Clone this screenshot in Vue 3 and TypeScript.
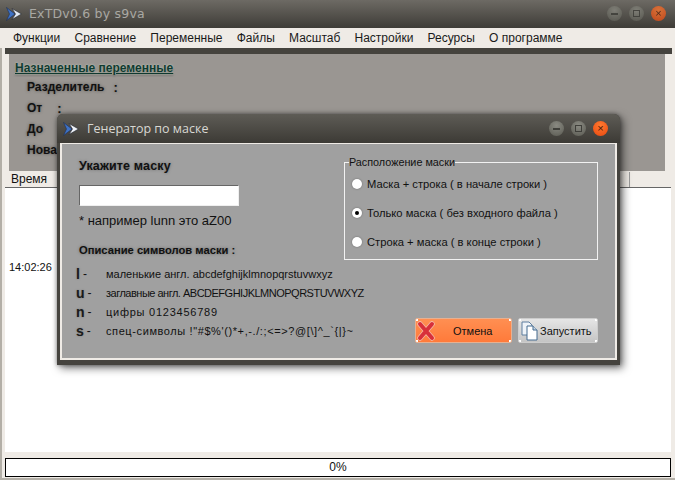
<script setup lang="ts">
const menu = ['Функции', 'Сравнение', 'Переменные', 'Файлы', 'Масштаб', 'Настройки', 'Ресурсы', 'О программе']
const vars = [
  { label: 'Разделитель', colon: ':', cls: 'sep' },
  { label: 'От', colon: ':', cls: 'from' },
  { label: 'До', colon: '', cls: 'to' },
  { label: 'Нова', colon: '', cls: 'nova' },
]
const radios = [
  { text: 'Маска + строка ( в начале строки )', on: false },
  { text: 'Только маска ( без входного файла )', on: true },
  { text: 'Строка + маска ( в конце строки )', on: false },
]
const legend = [
  { k: 'l', t: 'маленькие англ. abcdefghijklmnopqrstuvwxyz', cls: 'd-l' },
  { k: 'u', t: 'заглавные англ. ABCDEFGHIJKLMNOPQRSTUVWXYZ', cls: 'd-u' },
  { k: 'n', t: 'цифры 0123456789', cls: 'd-n' },
  { k: 's', t: 'спец-символы !"#$%\'()*+,-./:;<=>?@[\\]^_`{|}~', cls: 'd-s' },
]
</script>

<template>
  <div class="win">
    <header class="title">
      <svg class="logo" width="16" height="14" viewBox="0 0 16 14"><path d="M0.5 0.5 L9 7 L0.5 13.5 L3.5 7 Z" fill="#3f72c4" stroke="#1d2f55" stroke-width=".6"/><path d="M6 1.5 L15.5 7 L6 12.5 L9.5 7 Z" fill="#e2e9f4" stroke="#20242c" stroke-width=".6"/></svg>
      <span class="title-text">ExTDv0.6 by s9va</span>
      <div class="ctrls dim">
        <span class="c"><i class="minus"></i></span>
        <span class="c"><i class="square"></i></span>
        <span class="c close">×</span>
      </div>
    </header>
    <nav class="menu"><span v-for="m in menu" :key="m">{{ m }}</span></nav>
    <div class="darkbar"></div>
    <section class="vars">
      <div class="vars-h">Назначенные переменные</div>
      <div v-for="v in vars" :key="v.label" class="var" :class="v.cls"><b>{{ v.label }}</b><b class="colon">{{ v.colon }}</b></div>
    </section>
    <div class="thead"><span class="th first">Время</span><span class="th fill"></span><span class="th end"></span></div>
    <div class="tbody"><span class="time">14:02:26</span></div>
    <div class="foot"><div class="progress">0%</div></div>

    <div class="dialog">
      <header class="dtitle">
        <svg class="dlogo" width="16" height="14" viewBox="0 0 16 14"><path d="M0.5 0.5 L9 7 L0.5 13.5 L3.5 7 Z" fill="#3f72c4" stroke="#1d2f55" stroke-width=".6"/><path d="M6 1.5 L15.5 7 L6 12.5 L9.5 7 Z" fill="#eef2f8" stroke="#20242c" stroke-width=".6"/></svg>
        <span class="dtitle-text">Генератор по маске</span>
        <div class="ctrls">
          <span class="c"><i class="minus"></i></span>
          <span class="c"><i class="square"></i></span>
          <span class="c close">×</span>
        </div>
      </header>
      <div class="dbody">
        <div class="left">
          <div class="h h1">Укажите маску</div>
          <div class="input"></div>
          <div class="hint">* например lunn это aZ00</div>
          <div class="h h2">Описание символов маски :</div>
          <div v-for="l in legend" :key="l.k" class="row"><span class="key"><b>{{ l.k }}</b><span class="dash">-</span></span><span class="desc" :class="l.cls">{{ l.t }}</span></div>
        </div>
        <div class="right">
          <fieldset class="group">
            <legend>Расположение маски</legend>
            <div v-for="r in radios" :key="r.text" class="radio"><span class="dot" :class="{ on: r.on }"></span><span>{{ r.text }}</span></div>
          </fieldset>
          <div class="btns">
            <div class="btn cancel">
              <svg width="18" height="20" viewBox="0 0 18 20"><g fill="none" stroke-linecap="round"><path d="M3 3 L15 17 M15 3 L3 17" stroke="#f4b8a8" stroke-width="5.5"/><path d="M3 3 L15 17 M15 3 L3 17" stroke="#d8303a" stroke-width="4"/></g></svg>
              <span>Отмена</span>
            </div>
            <div class="btn run">
              <svg width="20" height="20" viewBox="0 0 20 20"><path d="M2 1 H9 L12 4 V14 H2 Z" fill="#eef3f8" stroke="#5f7f9f"/><path d="M7 5 H13 L17 9 V19 H7 Z" fill="#fff" stroke="#456b8f"/><path d="M13 5 V9 H17" fill="#c9d8e6" stroke="#456b8f"/></svg>
              <span>Запустить</span>
            </div>
          </div>
        </div>
      </div>
    </div>
  </div>
</template>

<style>
html, body { margin: 0; padding: 0; }
</style>

<style scoped>
.win { position: relative; width: 675px; height: 480px; overflow: hidden; background: #efebe6; display: flex; flex-direction: column; font-family: "Liberation Sans", sans-serif; color: #111; font-size: 12px; box-shadow: inset 2px 0 0 #b3afa7, inset 0 -2px 0 #b3afa7; }
.title { height: 28px; flex: none; display: flex; align-items: center; padding: 0 6px 1px 6px; box-sizing: border-box; background: linear-gradient(#6d6a64, #3e3c37); color: #a9a8a3; }
.logo { margin-right: 7px; }
.title-text { font-family: "DejaVu Sans", sans-serif; font-size: 12.5px; letter-spacing: .2px; }
.ctrls { margin-left: auto; display: flex; gap: 7px; align-items: center; }
.ctrls.dim { margin-right: 3px; opacity: .75; }
.c { width: 15px; height: 15px; border-radius: 50%; background: radial-gradient(circle at 50% 30%, #8a8a82, #5a5a52); display: flex; align-items: center; justify-content: center; color: #3a3a36; font-size: 11px; line-height: 1; }
.c.close { background: radial-gradient(circle at 50% 30%, #ff7a30, #e8470f); color: #4a1a08; }
.minus { width: 7px; height: 2px; background: #3f3f3a; display: block; }
.square { width: 5px; height: 5px; border: 1px solid #3f3f3a; display: block; }
.menu { height: 20px; flex: none; display: flex; align-items: center; gap: 14.2px; padding-left: 13px; background: #efebe6; font-size: 12px; color: #1a1a1a; }
.darkbar { height: 6px; flex: none; margin: 0 3px 0 5px; background: #45433e; }
.vars { height: 117px; flex: none; margin: 0 10px 0 9px; background: #9a9692; position: relative; box-sizing: border-box; padding: 6px 0 0 6px; }
.vars-h { font-weight: bold; font-size: 12px; color: #0f3a30; text-decoration: underline; text-shadow: 0 0 2px #e6f0dc, 0 1px 2px #333; line-height: 16px; }
.var { font-size: 12px; display: flex; padding-left: 12px; text-shadow: 0 0 3px #55524f; }
.var b { font-weight: bold; color: #111; }
.sep { margin-top: 4px; height: 21px; }
.sep .colon { margin-left: 9px; }
.from { height: 21px; }
.from .colon { margin-left: 15px; }
.to { height: 21px; }
.colon { font-size: 13px; }
.thead { height: 16px; flex: none; margin: 1px 4px 0 5px; display: flex; background: #efebe6; box-sizing: border-box; border-bottom: 1px solid #666; }
.th { border-right: 1px solid #999; font-size: 12px; padding-left: 6px; line-height: 14px; }
.first { width: 50px; }
.fill { flex: 1; }
.end { width: 35px; border-right: 0; }
.tbody { height: 264px; flex: none; margin: 0 4px 0 5px; background: #fff; box-sizing: border-box; padding: 72px 0 0 4px; }
.time { font-size: 11px; line-height: 14px; display: block; }
.foot { flex: 1; padding: 6px 4px 0 5px; }
.progress { height: 17px; border: 1px solid #000; background: #fff; text-align: center; font-size: 12px; line-height: 17px; }
.dialog { position: absolute; left: 57px; top: 114px; width: 563px; height: 251px; background: #45433e; border-radius: 6px 6px 0 0; box-shadow: 3px 3px 8px rgba(0,0,0,.55), 0 0 4px rgba(0,0,0,.4); display: flex; flex-direction: column; }
.dtitle { height: 29px; flex: none; display: flex; align-items: center; padding: 0 12px 0 6px; box-sizing: border-box; background: linear-gradient(#5e5c56, #3c3a35); border-radius: 6px 6px 0 0; color: #d8d8d3; }
.dlogo { margin-right: 8px; }
.dtitle-text { font-family: "Open Sans", sans-serif; font-size: 12.5px; }
.dbody { margin: 0 3px 5px 3px; flex: 1; border: solid #efebe6; border-width: 1px 2px 2px 2px; background: #a0a0a0; display: flex; box-sizing: border-box; }
.left { width: 278px; flex: none; padding: 14px 0 0 17px; box-sizing: border-box; }
.h { font-weight: bold; color: #111; text-shadow: 0 0 3px #666; line-height: 16px; }
.h1 { font-size: 12.5px; letter-spacing: .15px; }
.input { width: 158px; height: 19px; margin-top: 11px; background: #fff; border: 1px solid; border-color: #666 #efefef #efefef #666; }
.hint { font-size: 13px; margin-top: 7px; line-height: 16px; color: #111; }
.h2 { font-size: 11.2px; margin-top: 13px; margin-bottom: 6px; }
.row { height: 19px; display: flex; align-items: center; white-space: nowrap; }
.key { width: 28px; flex: none; display: flex; align-items: center; margin-left: -3px; }
.key b { font-size: 14px; color: #1a1a1a; text-shadow: 0 0 2px #777; }
.dash { margin-left: 3px; font-size: 12px; }
.desc { font-size: 11px; margin-left: 2px; }
.d-u { letter-spacing: -.5px; }
.d-n { letter-spacing: .75px; }
.d-s { letter-spacing: .6px; }
.right { flex: 1; padding-top: 13px; }
.group { box-sizing: border-box; width: 254px; height: 103px; margin: 0 0 0 4px; padding: 2px 0 0 5px; border: 1px solid #f2f2f2; border-radius: 0; min-width: 0; }
.group legend { padding: 0; margin-left: -1px; font-size: 10.8px; line-height: 10px; color: #111; }
.radio { display: flex; align-items: center; gap: 5px; height: 29px; font-size: 11.2px; color: #111; white-space: nowrap; }
.dot { width: 10px; height: 10px; border-radius: 50%; background: #fff; box-shadow: 0 0 2px #666; flex: none; position: relative; margin-left: 2px; }
.dot.on::after { content: ""; position: absolute; left: 3px; top: 3px; width: 4px; height: 4px; border-radius: 50%; background: #000; }
.btns { display: flex; gap: 6px; margin: 58px 0 0 75px; }
.btn { height: 25px; display: flex; align-items: center; box-sizing: border-box; border-radius: 2px; font-size: 11px; }
.cancel { width: 97px; padding-left: 1px; border: 1px solid #e8b090; background: linear-gradient(#fff,#fff) 0 0/2px 2px no-repeat, linear-gradient(#fff,#fff) 100% 0/2px 2px no-repeat, linear-gradient(#fff,#fff) 0 100%/2px 2px no-repeat, linear-gradient(#fff,#fff) 100% 100%/2px 2px no-repeat, linear-gradient(#ff8f52, #ff7a3a); }
.cancel span { margin-left: 18px; }
.run { width: 80px; padding-left: 1px; border: 1px solid #ccc; background: linear-gradient(#fff,#fff) 0 0/2px 2px no-repeat, linear-gradient(#fff,#fff) 100% 0/2px 2px no-repeat, linear-gradient(#fff,#fff) 0 100%/2px 2px no-repeat, linear-gradient(#fff,#fff) 100% 100%/2px 2px no-repeat, linear-gradient(#e6e6e6, #c4c4c4); }
</style>
